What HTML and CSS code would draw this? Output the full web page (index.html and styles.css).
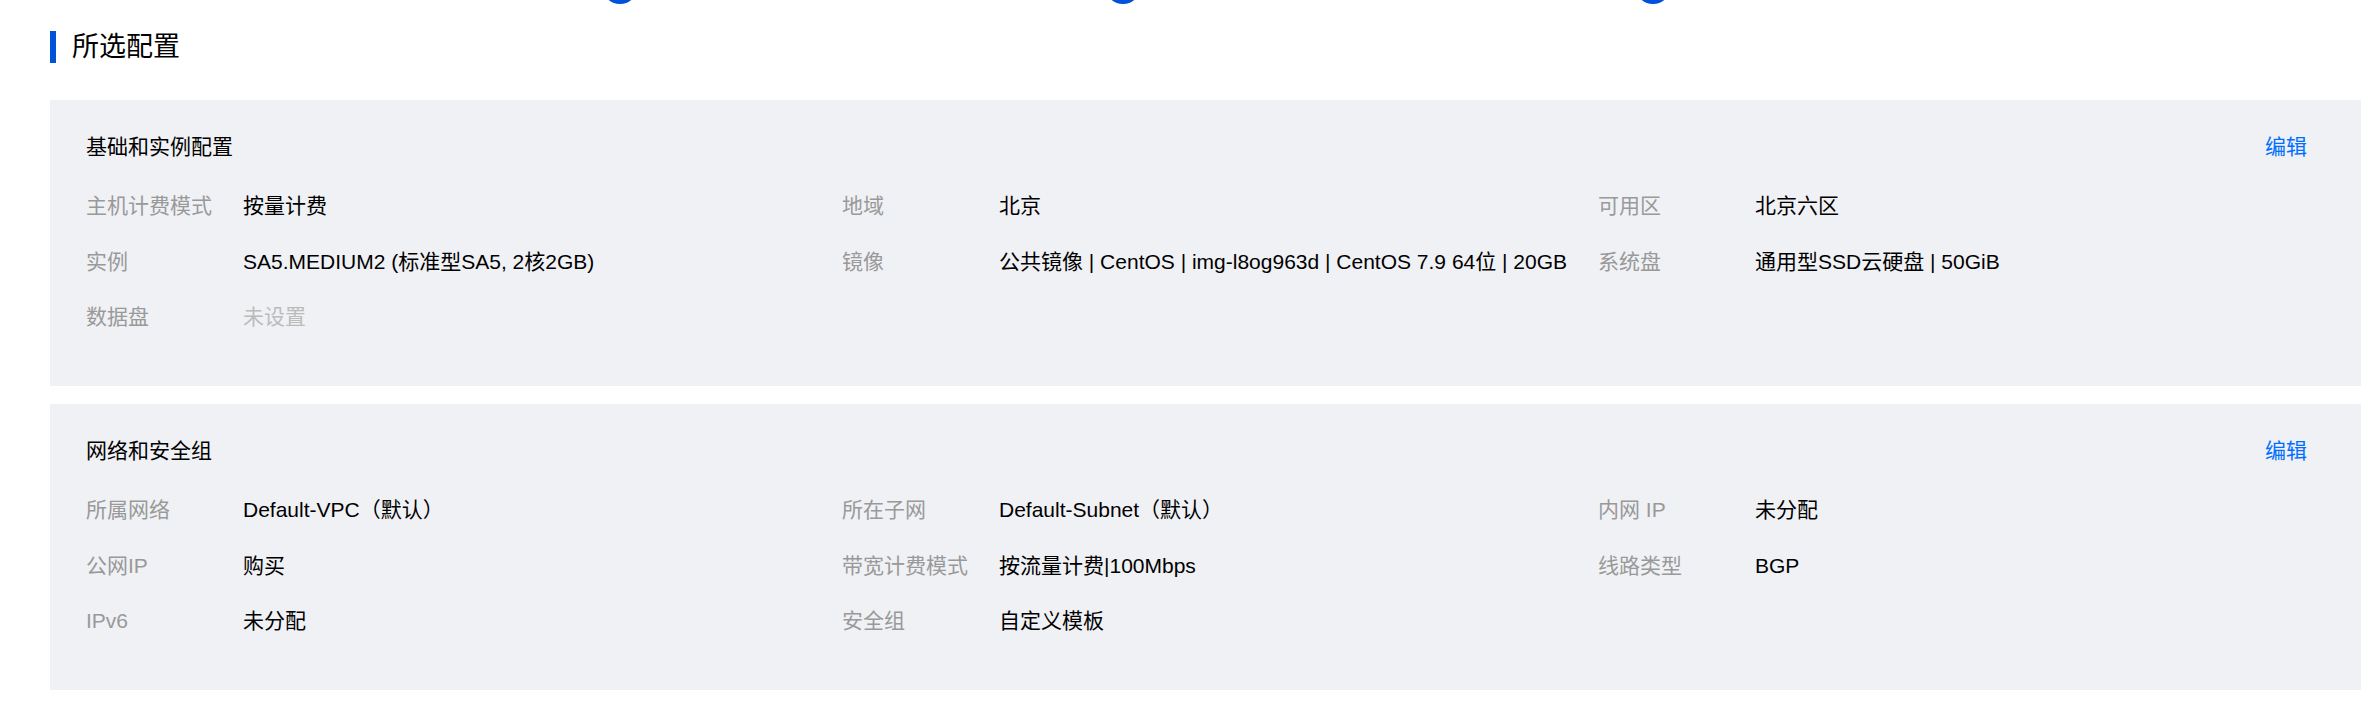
FILE: index.html
```html
<!DOCTYPE html>
<html lang="zh-CN">
<head>
<meta charset="utf-8">
<title>所选配置</title>
<link rel="stylesheet" href="styles.css">
</head>
<body>
<div class="page">
  <div class="steps">
    <span class="step-dot s1"></span>
    <span class="step-dot s2"></span>
    <span class="step-dot s3"></span>
  </div>
  <h2 class="title">所选配置</h2>

  <section class="panel">
    <div class="panel-head">
      <span class="panel-title">基础和实例配置</span>
      <a class="edit" href="#">编辑</a>
    </div>
    <div class="grid">
      <div class="item"><span class="label">主机计费模式</span><span class="value">按量计费</span></div>
      <div class="item"><span class="label">地域</span><span class="value">北京</span></div>
      <div class="item"><span class="label">可用区</span><span class="value">北京六区</span></div>
      <div class="item"><span class="label">实例</span><span class="value">SA5.MEDIUM2 (标准型SA5, 2核2GB)</span></div>
      <div class="item"><span class="label">镜像</span><span class="value">公共镜像 | CentOS | img-l8og963d | CentOS 7.9 64位 | 20GB</span></div>
      <div class="item"><span class="label">系统盘</span><span class="value">通用型SSD云硬盘 | 50GiB</span></div>
      <div class="item"><span class="label">数据盘</span><span class="value muted">未设置</span></div>
    </div>
  </section>

  <section class="panel">
    <div class="panel-head">
      <span class="panel-title">网络和安全组</span>
      <a class="edit" href="#">编辑</a>
    </div>
    <div class="grid">
      <div class="item"><span class="label">所属网络</span><span class="value">Default-VPC（默认）</span></div>
      <div class="item"><span class="label">所在子网</span><span class="value">Default-Subnet（默认）</span></div>
      <div class="item"><span class="label">内网 IP</span><span class="value">未分配</span></div>
      <div class="item"><span class="label">公网IP</span><span class="value">购买</span></div>
      <div class="item"><span class="label">带宽计费模式</span><span class="value">按流量计费|100Mbps</span></div>
      <div class="item"><span class="label">线路类型</span><span class="value">BGP</span></div>
      <div class="item"><span class="label">IPv6</span><span class="value">未分配</span></div>
      <div class="item"><span class="label">安全组</span><span class="value">自定义模板</span></div>
    </div>
  </section>
</div>
</body>
</html>
```

FILE: styles.css
```css
html, body {
  margin: 0;
  padding: 0;
  background: #ffffff;
}

body {
  font-family: "Liberation Sans", "Noto Sans CJK SC", sans-serif;
  color: #000000;
}

.page {
  width: 2311px;
  margin-left: 50px;
}

.steps {
  height: 4px;
  overflow: hidden;
  display: flex;
}

.step-dot {
  flex: none;
  width: 36px;
  height: 36px;
  margin-top: -32px;
  border-radius: 50%;
  background: #0052d9;
}

.s1 { margin-left: 552px; }
.s2 { margin-left: 467px; }
.s3 { margin-left: 494px; }

.title {
  margin: 27px 0 0 0;
  height: 32px;
  line-height: 32px;
  border-left: 6px solid #0052d9;
  padding-left: 16px;
  font-size: 27px;
  font-weight: normal;
  color: #000000;
}

.panel {
  background: #f0f1f5;
  padding: 32px 36px 54px 36px;
  margin-top: 37px;
}

.panel + .panel {
  margin-top: 18px;
}

.panel-head {
  display: flex;
  justify-content: space-between;
  align-items: center;
  height: 30px;
  line-height: 30px;
  font-size: 21px;
  padding-right: 18px;
}

.panel-title {
  color: #000000;
}

.edit {
  color: #006eff;
  text-decoration: none;
}

.grid {
  margin-top: 29px;
  display: grid;
  grid-template-columns: 756px 756px 1fr;
  row-gap: 25.5px;
}

.item {
  display: flex;
  height: 30px;
  line-height: 30px;
  font-size: 21px;
  white-space: nowrap;
}

.label {
  flex: none;
  width: 157px;
  color: #999999;
}

.value {
  color: #000000;
}

.value.muted {
  color: #bbbbbb;
}
```
